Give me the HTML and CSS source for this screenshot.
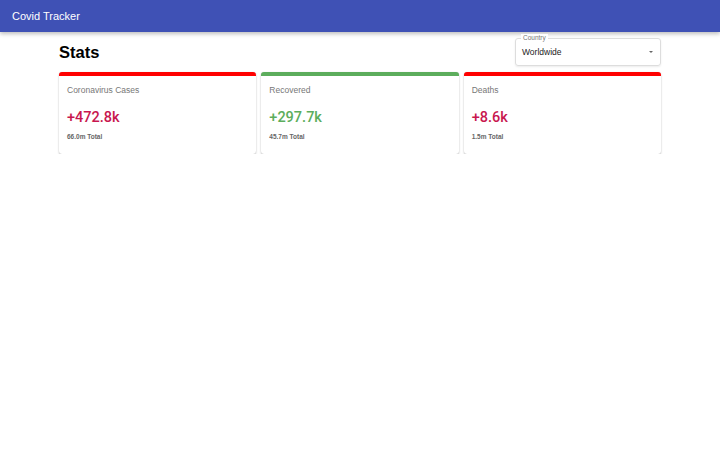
FILE: index.html
```html
<!DOCTYPE html>
<html>
<head>
<meta charset="utf-8">
<link rel="stylesheet" href="styles.css">
</head>
<body>
<header class="appbar"><span class="brand">Covid Tracker</span></header>
<main class="container">
  <div class="top-row">
    <h1 class="title">Stats</h1>
    <div class="select">
      <span class="select-label">Country</span>
      <span class="select-value">Worldwide</span>
      <span class="caret"></span>
    </div>
  </div>
  <div class="cards">
    <div class="card red">
      <div class="card-title">Coronavirus Cases</div>
      <div class="card-value">+472.8k</div>
      <div class="card-total">66.0m Total</div>
    </div>
    <div class="card green">
      <div class="card-title">Recovered</div>
      <div class="card-value green-text">+297.7k</div>
      <div class="card-total">45.7m Total</div>
    </div>
    <div class="card red">
      <div class="card-title">Deaths</div>
      <div class="card-value">+8.6k</div>
      <div class="card-total">1.5m Total</div>
    </div>
  </div>
</main>
</body>
</html>
```
FILE: styles.css
```css
* { box-sizing: border-box; }
body { margin: 0; font-family: "Liberation Sans", Arial, sans-serif; background: #fff; color: #000; }
.appbar { height: 32px; background: #3f51b5; display: flex; align-items: center; padding-left: 12px; box-shadow: 0 2px 4px rgba(0,0,0,0.25); }
.brand { color: #fff; font-size: 11px; }
.container { width: 602px; margin: 0 auto; }
.top-row { display: flex; justify-content: space-between; align-items: center; margin-top: 6px; height: 28px; }
.title { margin: 0; font-size: 16.5px; font-weight: 700; }
.select { position: relative; width: 146px; height: 28px; border: 1px solid #ddd; border-radius: 3px; display: flex; align-items: center; padding-left: 6px; box-shadow: 0 1px 2px rgba(0,0,0,0.08); }
.select-label { position: absolute; top: -5px; left: 5px; background: #fff; padding: 0 2px; font-size: 6.5px; color: #777; }
.select-value { font-size: 8.5px; color: #222; }
.caret { position: absolute; right: 7px; top: 12px; width: 0; height: 0; border-left: 2.5px solid transparent; border-right: 2.5px solid transparent; border-top: 2.5px solid #666; }
.cards { display: grid; grid-template-columns: repeat(3, 1fr); gap: 5px; margin-top: 6px; }
.card { height: 82px; border-radius: 3px; border-top: 4px solid #f00; box-shadow: 0 1px 2px rgba(0,0,0,0.25), 0 0 1px rgba(0,0,0,0.1); padding: 9px 8px 0; background: #fff; }
.card.green { border-top-color: #5cad5c; }
.card-title { font-size: 8.5px; color: #777; line-height: 10px; }
.card-value { margin-top: 14px; font-family: Roboto, "Liberation Sans", sans-serif; font-weight: 500; font-size: 14.5px; color: #c8174f; line-height: 18px; }
.card-value.green-text { color: #5cad5c; }
.card-total { margin-top: 6px; font-size: 6.5px; font-weight: 700; color: #666; }
```
